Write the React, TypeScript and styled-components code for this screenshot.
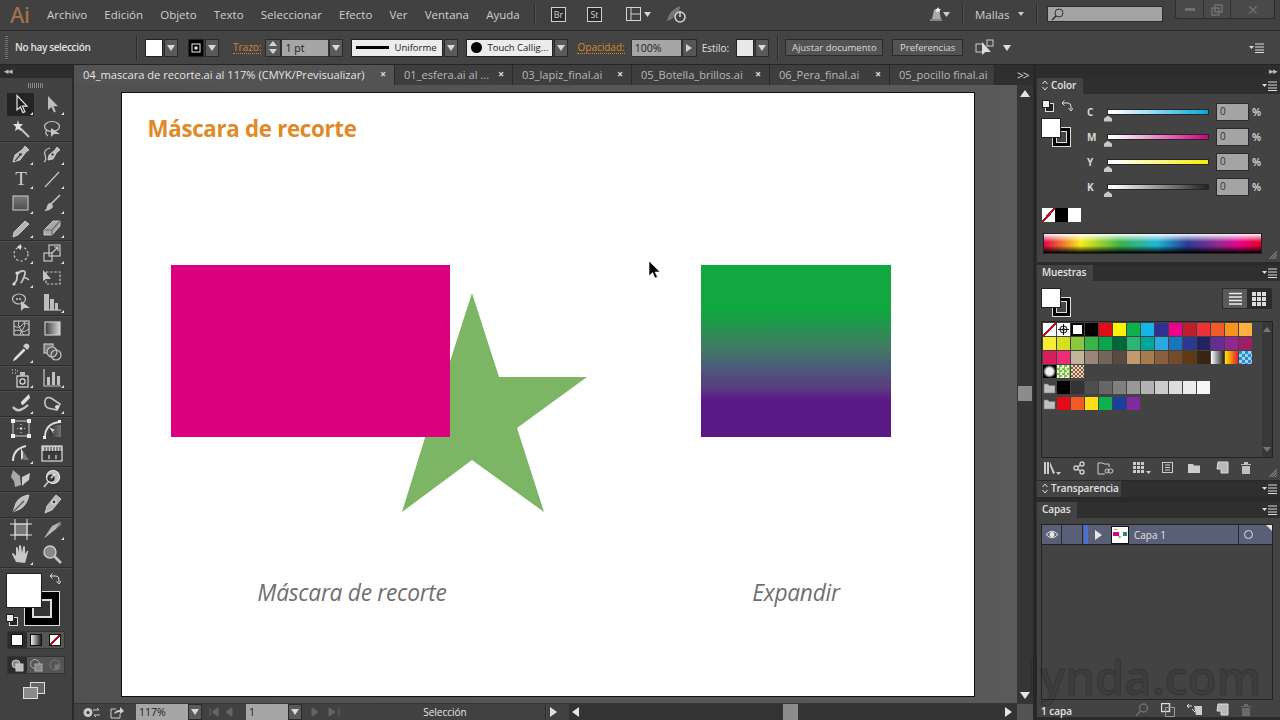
import React from 'react';
import styled, { createGlobalStyle } from 'styled-components';

const Global = createGlobalStyle`
  html, body { margin: 0; padding: 0; background: #3f3f3f; overflow: hidden; }
  * { box-sizing: border-box; }
`;

const Root = styled.div`
  position: relative;
  width: 1280px;
  height: 720px;
  overflow: hidden;
  display: flex;
  flex-direction: column;
  background: #3f3f3f;
  font-family: "Open Sans", "Noto Sans", sans-serif;
  font-size: 11px;
  color: #d6d6d6;
`;

/* ---------- menu bar ---------- */
const MenuBar = styled.header`
  height: 31px;
  flex: none;
  display: flex;
  align-items: center;
  padding-bottom: 2px;
  background: #414141;
  border-bottom: 1px solid #2a2a2a;
  position: relative;
`;
const Logo = styled.div`
  width: 47px;
  padding-left: 10px;
  font-family: "Noto Sans", sans-serif;
  font-size: 22px;
  font-weight: 500;
  letter-spacing: -0.5px;
  color: #a86f4d;
`;
const MenuList = styled.nav`
  display: flex;
  gap: 17.2px;
  width: 487px;
`;
const MenuItem = styled.span`
  font-size: 11.5px;
  color: #cfcfcf;
`;
const VSep = styled.i<{ $h?: number; $ml?: number }>`
  display: block;
  width: 2px;
  height: ${p => p.$h ?? 22}px;
  background: #2e2e2e;
  border-right: 1px solid #4e4e4e;
  margin-left: ${p => p.$ml ?? 0}px;
  flex: none;
`;
const BridgeIcon = styled.span<{ $ml: number }>`
  width: 15px;
  height: 15px;
  margin-left: ${p => p.$ml}px;
  border: 1px solid #d0d0d0;
  background: #2b2b2b;
  font-size: 9px;
  line-height: 13px;
  text-align: center;
  color: #d0d0d0;
  flex: none;
`;
const Slot = styled.span<{ $ml?: number; $w?: number }>`
  display: inline-flex;
  align-items: center;
  flex: none;
  margin-left: ${p => p.$ml ?? 0}px;
  ${p => (p.$w ? `width: ${p.$w}px;` : '')}
`;
const SearchBox = styled.div`
  margin-left: 9px;
  width: 116px;
  height: 16px;
  background: #a3a3a3;
  border: 1px solid #2c2c2c;
  display: flex;
  align-items: center;
  padding-left: 3px;
  flex: none;
`;
const WindowButtons = styled.div`
  position: absolute;
  right: 5px;
  top: 0;
  width: 100px;
  height: 19px;
  display: grid;
  grid-template-columns: 28px 27px 1fr;
  background: #494949;
  border: 1px solid #2c2c2c;
  border-top: none;
  border-radius: 0 0 3px 3px;
  color: #707070;
`;
const WinBtn = styled.span`
  display: flex;
  align-items: center;
  justify-content: center;
  font-size: 14px;
  border-right: 1px solid #333;
  &:last-child { border-right: none; }
`;

/* ---------- control bar ---------- */
const ControlBar = styled.div`
  height: 34px;
  flex: none;
  display: flex;
  align-items: center;
  background: #444444;
  border-bottom: 1px solid #252525;
  position: relative;
`;
const Grip = styled.i`
  width: 3px;
  height: 24px;
  margin-left: 5px;
  background: repeating-linear-gradient(to bottom, #777 0 1px, #3a3a3a 1px 2px);
  flex: none;
`;
const SelText = styled.span`
  margin-left: 7px;
  width: 121px;
  padding-bottom: 2px;
  font-size: 10px;
  font-weight: 600;
  letter-spacing: -0.35px;
  color: #e0e0e0;
  flex: none;
`;
const FillBox = styled.span<{ $w: number; $c: string; $ml?: number }>`
  display: flex;
  align-items: center;
  justify-content: center;
  width: ${p => p.$w}px;
  height: 18px;
  margin-left: ${p => p.$ml ?? 0}px;
  background: ${p => p.$c};
  border: 1px solid #222;
  flex: none;
`;
const DropBtn = styled.span<{ $h?: number; $ml?: number }>`
  width: 14px;
  height: ${p => p.$h ?? 18}px;
  margin-left: ${p => p.$ml ?? 1}px;
  display: flex;
  align-items: center;
  justify-content: center;
  background: #5a5a5a;
  border: 1px solid #2a2a2a;
  flex: none;
  &::after {
    content: '';
    border-left: 4px solid transparent;
    border-right: 4px solid transparent;
    border-top: 6px solid #d8d8d8;
  }
`;
const OrangeLabel = styled.span<{ $ml: number }>`
  margin-left: ${p => p.$ml}px;
  font-size: 10px;
  color: #d3882c;
  border-bottom: 1px dotted #d3882c;
  line-height: 12px;
  flex: none;
`;
const Spinner = styled.span`
  width: 16px;
  height: 18px;
  margin-left: 4px;
  display: grid;
  grid-template-rows: 1fr 1fr;
  background: #5a5a5a;
  border: 1px solid #2a2a2a;
  justify-items: center;
  align-items: center;
  flex: none;
`;
const TriUp = styled.i`
  border-left: 4px solid transparent;
  border-right: 4px solid transparent;
  border-bottom: 5px solid #d4d4d4;
`;
const TriDown = styled.i`
  border-left: 4px solid transparent;
  border-right: 4px solid transparent;
  border-top: 5px solid #d4d4d4;
`;
const Field = styled.span<{ $w: number; $ml?: number }>`
  width: ${p => p.$w}px;
  height: 18px;
  margin-left: ${p => p.$ml ?? 0}px;
  background: #a6a6a6;
  color: #222;
  font-size: 10.5px;
  line-height: 17px;
  padding-left: 3px;
  border: 1px solid #333;
  flex: none;
`;
const LightField = styled.span<{ $w: number; $ml: number }>`
  width: ${p => p.$w}px;
  height: 18px;
  margin-left: ${p => p.$ml}px;
  display: flex;
  align-items: center;
  background: #ececec;
  color: #222;
  font-size: 9.5px;
  border: 1px solid #222;
  padding: 0 4px;
  gap: 5px;
  white-space: nowrap;
  flex: none;
`;
const StrokeSample = styled.i`
  width: 33px;
  height: 3px;
  background: #000;
  flex: none;
`;
const BrushDot = styled.i`
  width: 11px;
  height: 11px;
  border-radius: 50%;
  background: #000;
  flex: none;
`;
const PlainLabel = styled.span<{ $ml: number }>`
  margin-left: ${p => p.$ml}px;
  font-size: 10px;
  color: #e0e0e0;
  flex: none;
`;
const ArrowBtn = styled.span`
  width: 15px;
  height: 18px;
  display: flex;
  align-items: center;
  justify-content: center;
  background: #555;
  border: 1px solid #2a2a2a;
  flex: none;
  &::after {
    content: '';
    border-top: 4px solid transparent;
    border-bottom: 4px solid transparent;
    border-left: 6px solid #d0d0d0;
  }
`;
const BarButton = styled.span<{ $w: number; $ml: number }>`
  width: ${p => p.$w}px;
  height: 17px;
  margin-left: ${p => p.$ml}px;
  background: #535353;
  border: 1px solid #2a2a2a;
  color: #dcdcdc;
  font-size: 9.5px;
  line-height: 15px;
  text-align: center;
  white-space: nowrap;
  flex: none;
`;
const RightMenu = styled.span`
  position: absolute;
  right: 16px;
  top: 12px;
  display: flex;
`;

/* ---------- work area ---------- */
const Work = styled.div`
  flex: 1;
  min-height: 0;
  display: flex;
`;

/* tools */
const ToolPanel = styled.aside`
  width: 74px;
  flex: none;
  background: #414141;
  border-right: 2px solid #2a2a2a;
  display: flex;
  flex-direction: column;
`;
const ToolHead = styled.div`
  height: 13px;
  background: #2d2d2d;
  color: #bbb;
  font-size: 9px;
  line-height: 12px;
  padding-left: 4px;
  letter-spacing: -1px;
`;
const ToolGrip = styled.div`
  height: 14px;
  display: flex;
  align-items: center;
  justify-content: center;
  &::after {
    content: '';
    width: 16px;
    height: 5px;
    background: repeating-linear-gradient(to right, #8a8a8a 0 1px, #3a3a3a 1px 2px);
  }
`;
const ToolGroup = styled.div`
  padding: 0 5px;
  display: grid;
  grid-template-columns: 31px 31px;
  grid-auto-rows: 24.5px;
  border-bottom: 1px solid #2d2d2d;
  box-shadow: 0 1px 0 #4c4c4c;
`;
const ToolCell = styled.div<{ $on?: boolean }>`
  position: relative;
  display: flex;
  align-items: center;
  justify-content: center;
  &::before {
    content: '';
    position: absolute;
    inset: 1px 2px 1px 2px;
    background: ${p => (p.$on ? '#242424' : 'transparent')};
  }
  svg { position: relative; }
`;
const Corner = styled.i`
  position: absolute;
  right: 3px;
  bottom: 2px;
  border-left: 3px solid transparent;
  border-bottom: 3px solid #e0e0e0;
`;
const ToolColor = styled.div`
  position: relative;
  height: 62px;
`;
const BigFill = styled.div`
  position: absolute;
  left: 6px;
  top: 5px;
  width: 36px;
  height: 35px;
  background: #fff;
  border: 1px solid #222;
  z-index: 1;
`;
const BigStroke = styled.div`
  position: absolute;
  left: 24px;
  top: 23px;
  width: 36px;
  height: 35px;
  background: #000;
  border: 1px solid #ddd;
  &::after {
    content: '';
    position: absolute;
    left: 7px;
    top: 7px;
    right: 7px;
    bottom: 7px;
    border: 2px solid #ddd;
    background: #333;
  }
`;
const OverIcon = styled.span<{ $x: number; $y: number }>`
  position: absolute;
  left: ${p => p.$x}px;
  top: ${p => p.$y}px;
  display: flex;
`;
const ModeRow = styled.div<{ $mt: number }>`
  width: 58px;
  height: 18px;
  margin: ${p => p.$mt}px 0 0 7px;
  display: grid;
  grid-template-columns: repeat(3, 1fr);
  background: #555;
  border: 1px solid #333;
`;
const ModeCell = styled.span<{ $on?: boolean }>`
  display: flex;
  align-items: center;
  justify-content: center;
  background: ${p => (p.$on ? '#2c2c2c' : 'transparent')};
`;
const ModeSwatch = styled.i<{ $bg: string }>`
  width: 12px;
  height: 12px;
  border: 1px solid #111;
  background: ${p => p.$bg};
`;
const ScreenMode = styled.div`
  margin: 8px 0 0 23px;
  display: flex;
`;

/* document */
const Doc = styled.main`
  flex: 1;
  min-width: 0;
  display: flex;
  flex-direction: column;
  border-right: 3px solid #272727;
`;
const DocTabs = styled.div`
  height: 20px;
  flex: none;
  display: flex;
  align-items: center;
  background: #2f2f2f;
  position: relative;
`;
const DocTab = styled.div<{ $w: number; $on?: boolean }>`
  width: ${p => p.$w}px;
  height: 20px;
  flex: none;
  display: flex;
  align-items: center;
  justify-content: space-between;
  padding: 0 8px 2px 9px;
  background: ${p => (p.$on ? '#535353' : '#3e3e3e')};
  border-right: 1px solid #2a2a2a;
  color: ${p => (p.$on ? '#e4e4e4' : '#b8b8b8')};
  font-size: 11.1px;
  white-space: nowrap;
  overflow: hidden;
`;
const Close = styled.b`
  font-size: 10px;
  color: #e0e0e0;
  line-height: 1;
  font-weight: 700;
`;
const More = styled.span`
  margin-left: 22px;
  font-size: 12px;
  letter-spacing: -1px;
  color: #d4d4d4;
`;
const DocBody = styled.div`
  flex: 1;
  min-height: 0;
  display: flex;
`;
const Canvas = styled.div`
  flex: 1;
  min-width: 0;
  padding: 8px 0 0 48px;
  background: linear-gradient(to right, #505050, #5a5a5a);
`;
const Artboard = styled.div`
  position: relative;
  width: 852px;
  height: 603px;
  background: #fff;
  outline: 1px solid #111;
`;
const Heading = styled.h1`
  position: absolute;
  left: 25.500px;
  top: 20px;
  margin: 0;
  font-family: "Open Sans", sans-serif;
  font-size: 22.3px;
  font-weight: 700;
  letter-spacing: -0.3px;
  color: #df8a26;
  white-space: nowrap;
`;
const Caption = styled.p<{ $cx: number }>`
  position: absolute;
  left: ${p => p.$cx - 150}px;
  top: 484px;
  width: 300px;
  margin: 0;
  text-align: center;
  font-family: "Open Sans", sans-serif;
  font-style: italic;
  font-size: 22.8px;
  letter-spacing: -0.3px;
  color: #6f6f6f;
`;
const Art = styled.div<{ $x: number; $y: number; $w: number; $h: number; $bg?: string }>`
  position: absolute;
  left: ${p => p.$x}px;
  top: ${p => p.$y}px;
  width: ${p => p.$w}px;
  height: ${p => p.$h}px;
  background: ${p => p.$bg ?? 'transparent'};
`;
const VScroll = styled.div`
  width: 16px;
  flex: none;
  background: #353535;
  display: flex;
  flex-direction: column;
  align-items: center;
  padding-top: 5px;
  position: relative;
`;
const ScrollUp = styled.i`
  border-left: 5px solid transparent;
  border-right: 5px solid transparent;
  border-bottom: 7px solid #e4e4e4;
`;
const ScrollDown = styled.i`
  position: absolute;
  bottom: 4px;
  border-left: 5px solid transparent;
  border-right: 5px solid transparent;
  border-top: 7px solid #e4e4e4;
`;
const ScrollThumb = styled.i`
  position: absolute;
  top: 301px;
  left: 1px;
  width: 14px;
  height: 15px;
  background: #8c8c8c;
`;
const StatusBar = styled.footer`
  height: 17px;
  flex: none;
  display: flex;
  align-items: center;
  background: #414141;
  border-top: 1px solid #353535;
`;
const StatusField = styled.span<{ $w: number; $ml: number }>`
  width: ${p => p.$w}px;
  height: 16px;
  margin-left: ${p => p.$ml}px;
  background: #a6a6a6;
  color: #222;
  font-size: 10.5px;
  line-height: 17px;
  padding-left: 3px;
  flex: none;
`;
const StatusText = styled.span`
  width: 200px;
  margin-left: 5px;
  text-align: center;
  font-size: 10px;
  color: #e8e8e8;
  flex: none;
`;
const HScroll = styled.div`
  flex: 1;
  height: 16px;
  background: #333;
  display: flex;
  align-items: center;
  padding: 0 5px 0 3px;
  justify-content: space-between;
  position: relative;
`;
const ScrollLeft = styled.i`
  border-top: 5px solid transparent;
  border-bottom: 5px solid transparent;
  border-right: 7px solid #e4e4e4;
`;
const ScrollRight = styled.i`
  border-top: 5px solid transparent;
  border-bottom: 5px solid transparent;
  border-left: 7px solid #e4e4e4;
`;
const HThumb = styled.i`
  position: absolute;
  left: 214px;
  top: 0;
  width: 15px;
  height: 16px;
  background: #8c8c8c;
`;
const ScrollCorner = styled.i`
  width: 16px;
  height: 16px;
  background: #535353;
  flex: none;
`;

/* dock */
const Dock = styled.aside`
  width: 244px;
  flex: none;
  display: flex;
  flex-direction: column;
  background: #2a2a2a;
`;
const DockTop = styled.div`
  height: 13px;
  text-align: right;
  padding-right: 3px;
  color: #bbb;
  font-size: 9px;
  line-height: 11px;
  letter-spacing: -1px;
  background: #2d2d2d;
`;
const PanelHead = styled.div<{ $mt?: number }>`
  height: 16px;
  flex: none;
  margin-top: ${p => p.$mt ?? 0}px;
  display: flex;
  align-items: stretch;
  justify-content: space-between;
  background: #2f2f2f;
  padding: 0 3px 0 1px;
`;
const PanelTab = styled.span<{ $w: number }>`
  width: ${p => p.$w}px;
  background: #434343;
  font-size: 10px;
  font-weight: 600;
  letter-spacing: -0.1px;
  color: #e4e4e4;
  padding: 0 0 2px 5px;
  display: flex;
  align-items: center;
  gap: 3px;
  white-space: nowrap;
`;
const PanelMenu = styled.span`
  display: flex;
  align-items: center;
`;
const Panel = styled.section<{ $h: number }>`
  position: relative;
  height: ${p => p.$h}px;
  flex: none;
  background: #434343;
  margin-left: 1px;
`;
const ColorTop = styled.div`
  display: flex;
  height: 108px;
`;
const ColorLeft = styled.div`
  position: relative;
  width: 50px;
  flex: none;
`;
const Sliders = styled.div`
  padding-top: 5px;
  flex: 1;
`;
const SliderRow = styled.div`
  height: 25.2px;
  display: flex;
  align-items: center;
`;
const SliderLetter = styled.span`
  width: 20px;
  font-size: 10px;
  font-weight: 700;
  color: #d8d8d8;
  flex: none;
`;
const Track = styled.div<{ $c: string }>`
  position: relative;
  width: 102px;
  height: 6px;
  background: linear-gradient(to right, #fff 5%, ${p => p.$c});
  border: 1px solid #262626;
  flex: none;
  &::after {
    content: '';
    position: absolute;
    left: -4px;
    top: 6px;
    width: 8px;
    height: 6px;
    background: #c8c8c8;
    clip-path: polygon(50% 0, 100% 50%, 100% 100%, 0 100%, 0 50%);
  }
`;
const SliderInput = styled.span`
  width: 33px;
  height: 18px;
  margin-left: 7px;
  background: #a4a4a4;
  border: 1px solid #2b2b2b;
  color: #333;
  font-size: 10px;
  line-height: 14px;
  padding-left: 3px;
  flex: none;
`;
const Percent = styled.span`
  margin-left: 3px;
  font-size: 10.5px;
  font-weight: 600;
  color: #dcdcdc;
`;
const FillSmall = styled.i<{ $x: number; $y: number }>`
  position: absolute;
  left: ${p => p.$x}px;
  top: ${p => p.$y}px;
  width: 20px;
  height: 20px;
  background: #fff;
  border: 1px solid #222;
  z-index: 1;
`;
const StrokeSmall = styled.i<{ $x: number; $y: number }>`
  position: absolute;
  left: ${p => p.$x}px;
  top: ${p => p.$y}px;
  width: 19px;
  height: 20px;
  background: #000;
  border: 1px solid #ddd;
  &::after {
    content: '';
    position: absolute;
    inset: 3px;
    border: 1px solid #ddd;
    background: #444;
  }
`;
const QuickRow = styled.div`
  margin: 6px 0 0 5px;
  display: flex;
  height: 15px;
`;
const Quick = styled.i<{ $bg: string }>`
  width: 13px;
  height: 14px;
  background: ${p => p.$bg};
`;
const Spectrum = styled.div`
  margin: 10px 0 0 6px;
  width: 219px;
  height: 21px;
  border: 1px solid #222;
  background:
    linear-gradient(to bottom, rgba(255,255,255,.95) 0, rgba(255,255,255,0) 42%, rgba(0,0,0,0) 62%, #000 100%),
    linear-gradient(to right, #e8004c 0, #f7ec1a 17%, #3cb34a 35%, #1fb5d6 52%, #2a3a96 66%, #8e2a90 80%, #ec008c 90%, #e00028 100%);
`;
const ResizeGrip = styled.i`
  position: absolute;
  right: 3px;
  bottom: 3px;
  width: 9px;
  height: 9px;
  background: repeating-linear-gradient(135deg, transparent 0 1px, #777 1px 2px);
  clip-path: polygon(100% 0, 100% 100%, 0 100%);
`;
const SwatchHead = styled.div`
  position: relative;
  height: 40px;
`;
const ViewBtns = styled.div`
  position: absolute;
  left: 185px;
  top: 7px;
  width: 50px;
  height: 21px;
  display: grid;
  grid-template-columns: 1fr 1fr;
  border: 1px solid #2c2c2c;
`;
const ViewBtn = styled.span<{ $on?: boolean }>`
  display: flex;
  align-items: center;
  justify-content: center;
  background: ${p => (p.$on ? '#5a5a5a' : '#2b2b2b')};
`;
const SwatchBox = styled.div`
  margin-left: 4px;
  width: 232px;
  height: 137px;
  border: 1px solid #232323;
  display: flex;
`;
const SwatchList = styled.div`
  flex: 1;
  padding: 1px 0 0 1px;
`;
const SwatchRow = styled.div<{ $mb?: number }>`
  display: flex;
  height: 14px;
  margin-bottom: ${p => p.$mb ?? 0}px;
`;
const Swatch = styled.i<{ $bg: string }>`
  width: 13px;
  height: 13px;
  margin-right: 1px;
  background: ${p => p.$bg};
  display: flex;
  align-items: center;
  justify-content: center;
  flex: none;
`;
const SwatchScroll = styled.div`
  width: 10px;
  background: #383838;
  display: flex;
  flex-direction: column;
  align-items: center;
  justify-content: space-between;
  padding: 5px 0;
`;
const MiniUp = styled.i`
  border-left: 4px solid transparent;
  border-right: 4px solid transparent;
  border-bottom: 5px solid #777;
`;
const MiniDown = styled.i`
  border-left: 4px solid transparent;
  border-right: 4px solid transparent;
  border-top: 5px solid #777;
`;
const IconBar = styled.div`
  height: 22px;
  display: flex;
  align-items: center;
  position: relative;
`;
const LayerBox = styled.div`
  margin: 6px 0 0 4px;
  width: 232px;
  height: 176px;
  border: 1px solid #232323;
`;
const LayerRow = styled.div`
  height: 20px;
  display: flex;
  align-items: center;
  background: #585f76;
  border-bottom: 1px solid #222;
  position: relative;
`;
const LayerCell = styled.span<{ $w: number }>`
  width: ${p => p.$w}px;
  height: 100%;
  display: flex;
  align-items: center;
  justify-content: center;
  border-right: 1px solid #2a2a2a;
  flex: none;
`;
const ColorBar = styled.i`
  width: 4px;
  height: 100%;
  background: #4a6fd6;
  margin-left: 1px;
  border-right: 0;
  flex: none;
`;
const LayerArrow = styled.i`
  margin-left: 7px;
  border-top: 5px solid transparent;
  border-bottom: 5px solid transparent;
  border-left: 7px solid #e6e6e6;
  flex: none;
`;
const Thumb = styled.span`
  position: relative;
  width: 18px;
  height: 18px;
  margin-left: 9px;
  background: #fff;
  border: 1px solid #111;
  flex: none;
  display: flex;
`;
const LayerName = styled.span`
  margin-left: 5px;
  width: 104px;
  font-size: 10px;
  color: #e4e4e4;
  flex: none;
`;
const Target = styled.span`
  flex: 1;
  height: 100%;
  display: flex;
  align-items: center;
  padding-left: 5px;
  border-left: 1px solid #2a2a2a;
`;
const TargetRing = styled.i`
  width: 9px;
  height: 9px;
  border-radius: 50%;
  border: 1px solid #e0e0e0;
`;
const LayerFlag = styled.i`
  position: absolute;
  right: 0;
  top: 0;
  border-left: 6px solid transparent;
  border-top: 6px solid #e6e6e6;
`;
const LayerCount = styled.span`
  margin-left: 4px;
  width: 97px;
  font-size: 10px;
  font-weight: 600;
  color: #e4e4e4;
  flex: none;
`;
const Watermark = styled.div`
  position: absolute;
  left: 1027px;
  top: 654px;
  font-family: "Open Sans", sans-serif;
  font-size: 47px;
  line-height: 46px;
  font-weight: 600;
  color: rgba(40, 40, 40, 0.22);
  -webkit-text-stroke: 1px rgba(20, 20, 20, 0.28);
  pointer-events: none;
  white-space: nowrap;
  z-index: 5;
`;

/* ---------- drawings ---------- */
const L = '#c6c6c6';
const Svg: React.FC<{ s?: number; w?: number; h?: number; children: React.ReactNode }> = ({ s = 20, w, h, children }) => (
  <svg width={w ?? s} height={h ?? s} viewBox={`0 0 ${w ?? s} ${h ?? s}`} fill="none" stroke={L} strokeWidth={1.2}>{children}</svg>
);
const Selection = () => <Svg><path d="M6 1.5V16l3.3-3 2.6 5.6 2-1-2.5-5.4H16Z" fill="#1c1c1c" stroke="#e6e6e6" /></Svg>;
const Direct = () => <Svg><path d="M6 2v14l3.3-3 2.8 5.5 1.8-1-2.5-5.3H16Z" fill="#bdbdbd" stroke="none" /></Svg>;
const Wand = () => <Svg><path d="M9 9l9 9" strokeWidth={2} /><path d="M7 1l1 4 4 0-3 3 1 4-3-2-3 2 1-4-3-3 4 0z" fill="#e0e0e0" stroke="none" /></Svg>;
const Lasso = () => <Svg><ellipse cx="10" cy="7.5" rx="7.5" ry="5" /><path d="M5 11q-3 3 1 6" /><path d="M9 9v9l3-3h6Z" fill="#c6c6c6" stroke="none" /></Svg>;
const Pen = () => <Svg><path d="M14 2l4 4-3 2-6 8-7 2 2-7 8-6z" fill="#bdbdbd" stroke="#ddd" strokeWidth={0.8} /><path d="M4 17l5-6" stroke="#444" /><circle cx="9.5" cy="10.5" r="1.4" fill="#444" stroke="none" /></Svg>;
const CurvePen = () => <Svg><path d="M15 3l3 3-3 2-4 7-5 1 1-5 6-5z" fill="#bdbdbd" stroke="#ddd" strokeWidth={0.8} /><path d="M8 4Q1 6 3 11t-1 7" /><circle cx="10.5" cy="10.5" r="1.2" fill="#444" stroke="none" /></Svg>;
const TypeT = () => <Svg><text x="10" y="16" textAnchor="middle" fontFamily="Liberation Serif, serif" fontSize="19" fill="#cfcfcf" stroke="none">T</text></Svg>;
const LineI = () => <Svg><path d="M3 18L17 3" /></Svg>;
const RectI = () => <Svg s={22}><defs><linearGradient id="rg" x1="0" x2="0" y1="0" y2="1"><stop offset="0" stopColor="#7a7a7a" /><stop offset="1" stopColor="#4e4e4e" /></linearGradient></defs><rect x="3" y="4" width="15" height="14" fill="url(#rg)" stroke="#bbb" /></Svg>;
const Brush = () => <Svg><path d="M18 2L8 12" strokeWidth={1.6} /><path d="M8 10q3 1 3 4-3 4-9 4 3-2 3-5 1-3 3-3z" fill="#c0c0c0" stroke="none" /></Svg>;
const Pencil = () => <Svg><path d="M14 3l4 3L7 17l-5 2 1-5z" fill="#b5b5b5" stroke="#dadada" strokeWidth={0.8} /></Svg>;
const Eraser = () => <Svg><path d="M11 3h7v5l-8 9H2v-5z" fill="#a8a8a8" stroke="#ddd" strokeWidth={0.8} /><path d="M2 12h8l8-9M10 12v5" stroke="#6a6a6a" /></Svg>;
const Rotate = () => <Svg><circle cx="10" cy="11" r="7" strokeDasharray="2.5 2" /><path d="M10 1v6l-4-3z" fill="#ddd" stroke="none" /></Svg>;
const Scale = () => <Svg><rect x="2" y="10" width="8" height="8" /><rect x="7" y="2" width="11" height="11" /><path d="M10 10l6-6M12 4h4v4" /></Svg>;
const Warp = () => <Svg><path d="M3 15q3-1 3-6t5-6 2 6-3 5" strokeWidth={1.8} /><circle cx="3" cy="16" r="1.6" fill="#ddd" stroke="none" /><circle cx="6" cy="5" r="1.6" fill="#ddd" stroke="none" /><path d="M12 10q3-1 6 2" strokeWidth={1.4} /></Svg>;
const FreeT = () => <Svg><rect x="4" y="4" width="14" height="12" strokeDasharray="2.5 1.6" /><path d="M1 2v11l3-2 5 0z" fill="#c4c4c4" stroke="none" /></Svg>;
const Builder = () => <Svg><ellipse cx="8" cy="7" rx="6.5" ry="5" /><circle cx="6" cy="7" r="1" fill="#ccc" stroke="none" /><circle cx="9" cy="7" r="1" fill="#ccc" stroke="none" /><path d="M10 9v10l3-3h6Z" fill="#c6c6c6" stroke="none" /></Svg>;
const Perspective = () => <Svg><path d="M2 2h5v16H2zM8 7h4v11H8zM13 11h3v7h-3z" fill="#bdbdbd" stroke="none" /><path d="M2 18h17" /></Svg>;
const Mesh = () => <Svg><rect x="3" y="3" width="15" height="14" /><path d="M3 8q5 3 8-1t7 0M3 13q4-2 7 0t8-2M8 3q-2 4 1 7t0 7M13 3q2 5-1 8t1 6" strokeWidth={1} /></Svg>;
const Gradient = () => <Svg><defs><linearGradient id="gr"><stop offset="0" stopColor="#3a3a3a" /><stop offset="1" stopColor="#d8d8d8" /></linearGradient></defs><rect x="3" y="4" width="15" height="13" fill="url(#gr)" stroke="#ccc" /></Svg>;
const Dropper = () => <Svg><path d="M13 7l-9 9-1.5 2.5L5 17l9-9" fill="#ddd" stroke="#ddd" /><path d="M12 4l4 4 2-2q1-3-1-4t-3 0z" fill="#ccc" stroke="none" /></Svg>;
const Blend = () => <Svg><rect x="2" y="2" width="9" height="9" fill="#777" /><circle cx="10" cy="10" r="5" fill="#555" /><circle cx="14" cy="13" r="5" /></Svg>;
const Spray = () => <Svg><rect x="6" y="8" width="11" height="11" fill="#3c3c3c" stroke="#ddd" /><circle cx="11.5" cy="13.5" r="2.6" stroke="#ddd" /><path d="M9 4h5v4H9z" fill="#bbb" stroke="none" /><path d="M1 2h1M4 2h1M1 5h1M4 5h1M6 3h1" stroke="#ddd" /></Svg>;
const Graph = () => <Svg><path d="M2 1v17h17" /><path d="M5 9h3v8H5zM10 4h3v13h-3zM15 8h3v9h-3z" fill="#c0c0c0" stroke="none" /></Svg>;
const Blob = () => <Svg><path d="M2 14q3 4 7 3t8-5" strokeWidth={2.4} /><path d="M18 1l-8 8q0 3 2 3l7-7z" fill="#ddd" stroke="none" /></Svg>;
const Shaper = () => <Svg><path d="M3 8q1-5 6-3l9 6-3 6-9-2q-4-2-3-7z" strokeWidth={1.6} /><circle cx="15" cy="14" r="2" fill="#ddd" stroke="none" /></Svg>;
const Transform = () => <Svg s={22}><rect x="3" y="3" width="16" height="15" strokeWidth={1.6} stroke="#999" /><path d="M1 1h4v4H1zM17 1h4v4h-4zM1 16h4v4H1zM17 16h4v4h-4z" fill="#eee" stroke="none" /><circle cx="11" cy="10.5" r="1.3" fill="#ddd" stroke="none" /><path d="M11 6v1M11 14v1M7 10.5h1M14 10.5h1" /></Svg>;
const ArcTool = () => <Svg><defs><linearGradient id="ag"><stop offset="0" stopColor="#333" /><stop offset="1" stopColor="#777" /></linearGradient></defs><rect x="8" y="6" width="11" height="12" fill="url(#ag)" stroke="none" /><path d="M3 18Q3 5 17 3" strokeWidth={1.8} stroke="#ddd" /><path d="M7 8l6 3-2 1 1 3-3-4z" fill="#ddd" stroke="none" /><rect x="1" y="17" width="3" height="3" fill="#eee" stroke="none" /><rect x="16" y="1" width="3" height="3" fill="#eee" stroke="none" /></Svg>;
const WidthT = () => <Svg><path d="M2 18Q2 6 15 3" strokeWidth={2} stroke="#ddd" /><path d="M10 5v12l4-4z" fill="#ddd" stroke="none" /><path d="M12 8l6 9h-6z" fill="#777" stroke="none" /></Svg>;
const Ruler = () => <Svg s={22}><rect x="1" y="4" width="20" height="15" fill="#3a3a3a" stroke="#ddd" /><path d="M1 4h20v5H1z" fill="#ccc" stroke="none" /><path d="M4 5v5M7 5v5M10 5v6M13 5v5M16 5v5M19 5v6" stroke="#222" strokeWidth={0.9} /><path d="M8 13v4M15 13v4" stroke="#ddd" /></Svg>;
const Butterfly = () => <Svg s={22}><path d="M10 8L3 2 1 9l3 4 1 6 6-2z" fill="#a9a9a9" stroke="none" /><path d="M12 9l8-4-1 7-4 3-3 3z" fill="#cdcdcd" stroke="none" /></Svg>;
const Magic = () => <Svg><circle cx="11" cy="8" r="6.5" fill="#bdbdbd" stroke="#eee" /><circle cx="9" cy="9" r="3" fill="#444" stroke="#222" /><path d="M6 13l-4 5" strokeWidth={1.8} /><path d="M9 9l4-4" stroke="#eee" /></Svg>;
const Feather = () => <Svg s={22}><path d="M19 2q-9 1-13 8L3 19l7-3q7-4 9-14z" fill="#bfbfbf" stroke="#e0e0e0" strokeWidth={0.8} /><path d="M3 19L14 8" stroke="#555" /></Svg>;
const Marker = () => <Svg><path d="M14 1l5 4-9 11-5 2-2 1 1-3 1-4z" fill="#b5b5b5" stroke="#e0e0e0" strokeWidth={0.8} /><circle cx="12" cy="8" r="2" fill="#333" stroke="#ddd" /></Svg>;
const ArtboardI = () => <Svg s={22}><rect x="5" y="5" width="12" height="11" fill="#777" stroke="#aaa" /><path d="M0 5h22M0 16h22M5 0v21M17 0v21" stroke="#e4e4e4" strokeWidth={1} /></Svg>;
const Knife = () => <Svg><path d="M18 2l-4 7-10 8-2 1 8-12z" fill="#b5b5b5" stroke="none" /><path d="M18 2h1v3l-5 4z" fill="#888" stroke="none" /></Svg>;
const Hand = () => <Svg s={22}><path d="M6 19L2 11q0-2 2 0l2 2V5q0-2 2 0l1 5V3q1-2 2 0l1 7 1-6q1-2 2 0l0 7 2-3q2-1 1 1l-2 8-1 3z" fill="#c8c8c8" stroke="none" /></Svg>;
const Zoom = () => <Svg><circle cx="8" cy="8" r="6" fill="#888" stroke="#ccc" strokeWidth={1.4} /><path d="M12.5 12.5L19 19" strokeWidth={2.6} /></Svg>;

const PanelMenuIcon = () => (
  <svg width="15" height="10" viewBox="0 0 15 10"><path d="M0 3h5L2.5 6z" fill="#ddd" /><path d="M6 1h9M6 4h9M6 7h9M6 9.5h9" stroke="#ddd" strokeWidth={1} /></svg>
);
const UpDown = () => (
  <svg width="6" height="11" viewBox="0 0 6 11" fill="none" stroke="#ddd"><path d="M.5 4L3 1l2.500 3M.5 7L3 10l2.500-3" /></svg>
);
const DefaultColors = () => (
  <svg width="12" height="12" viewBox="0 0 12 12"><rect x="3.5" y="3.5" width="8" height="8" fill="#222" stroke="#ddd" /><rect x=".5" y=".5" width="7" height="7" fill="#eee" stroke="#222" /></svg>
);
const SwapArrows = () => (
  <svg width="12" height="12" viewBox="0 0 12 12" fill="none" stroke="#ddd"><path d="M2 3h5q3 0 3 4v2" /><path d="M3.5 .5L1 3l2.500 2.500M7.500 8L10 11l2-3" /></svg>
);
const Eye = () => (
  <svg width="14" height="9" viewBox="0 0 14 9"><path d="M1 4.500Q7-2 13 4.500 7 11 1 4.500Z" fill="none" stroke="#e6e6e6" /><circle cx="7" cy="4.500" r="2.500" fill="#e6e6e6" /></svg>
);
const ThumbArt = () => (
  <svg width="16" height="16" viewBox="0 0 16 16"><rect x="1" y="5" width="6" height="4" fill="#dc0081" /><rect x="11" y="5" width="4" height="4" fill="#2a8a5a" /><rect x="2" y="2" width="3" height="1" fill="#df8a26" /><path d="M6 9h3l-1 3z" fill="#7cb563" /></svg>
);

const FolderI = () => (
  <svg width="13" height="13" viewBox="0 0 13 13"><path d="M1 3h4l1 1.500h6V12H1z" fill="#c0c0c0" stroke="#777" strokeWidth={0.6} /></svg>
);
const BarIcon: React.FC<{ d: string; w?: number; fill?: string; stroke?: string }> = ({ d, w = 14, fill = '#cdcdcd', stroke = 'none' }) => (
  <svg width={w} height="14" viewBox={`0 0 ${w} 14`}><path d={d} fill={fill} stroke={stroke} /></svg>
);

const tools: { a: React.FC; b: React.FC; ac?: boolean; bc?: boolean; on?: boolean }[][] = [
  [{ a: Selection, b: Direct, ac: true, bc: true, on: true }, { a: Wand, b: Lasso }],
  [{ a: Pen, b: CurvePen, ac: true, bc: true }, { a: TypeT, b: LineI, ac: true, bc: true }, { a: RectI, b: Brush, ac: true, bc: true }, { a: Pencil, b: Eraser, ac: true, bc: true }],
  [{ a: Rotate, b: Scale, ac: true, bc: true }, { a: Warp, b: FreeT, ac: true }, { a: Builder, b: Perspective, bc: true }],
  [{ a: Mesh, b: Gradient }, { a: Dropper, b: Blend, ac: true }],
  [{ a: Spray, b: Graph, ac: true, bc: true }],
  [{ a: Blob, b: Shaper, ac: true, bc: true }],
  [{ a: Transform, b: ArcTool }, { a: WidthT, b: Ruler, ac: true }],
  [{ a: Butterfly, b: Magic }],
  [{ a: Feather, b: Marker }],
  [{ a: ArtboardI, b: Knife, bc: true }, { a: Hand, b: Zoom, ac: true }],
];

const noneFlip = 'linear-gradient(to bottom right, #fff 0 44%, #b01020 44% 56%, #fff 56% 100%)';
const row1 = ['#e30b17', '#fff200', '#0cb14b', '#14b6e8', '#2e3192', '#ec008c', '#be1e2d', '#ed3237', '#f15a29', '#f7941d', '#fbb040'];
const row2 = ['#f9ed32', '#d7df23', '#8dc63f', '#39b54a', '#09a64b', '#006838', '#2bb673', '#00a79d', '#27aae1', '#1c75bc', '#2b3990', '#262262', '#662d91', '#92278f', '#9e1f63'];
const row3 = ['#da1c5c', '#ee2a7b', '#c2b59b', '#9b8579', '#726658', '#594a42', '#c49a6c', '#a97c50', '#8b5e3c', '#754c29', '#603913', '#3c2415',
  'linear-gradient(to right, #fff, #222)', 'linear-gradient(to right, #ffe600, #e8202a)', 'repeating-conic-gradient(#9fd0ee 0 25%, #2a8fd0 0 50%) 0 0/6px 6px'];
const row4 = ['radial-gradient(circle, #eee 0 40%, #000 70%)', 'repeating-conic-gradient(#7ac143 0 25%, #e8f4d8 0 50%) 0 0/5px 5px', 'repeating-conic-gradient(#8a5a3c 0 25%, #e8d8c8 0 50%) 0 0/4px 4px'];
const row5 = ['#000', '#333', '#4d4d4d', '#666', '#808080', '#999', '#b3b3b3', '#ccc', '#dcdcdc', '#ececec', '#f6f6f6'];
const row6 = ['#e30b17', '#f15a24', '#ffde17', '#0cb14b', '#1b3f9e', '#7f2a9f'];

const menu = ['Archivo', 'Edición', 'Objeto', 'Texto', 'Seleccionar', 'Efecto', 'Ver', 'Ventana', 'Ayuda'];
const docTabs = [
  { t: '04_mascara de recorte.ai al 117% (CMYK/Previsualizar)', w: 321, on: true },
  { t: '01_esfera.ai al ...', w: 118 },
  { t: '03_lapiz_final.ai', w: 119 },
  { t: '05_Botella_brillos.ai', w: 138 },
  { t: '06_Pera_final.ai', w: 120 },
];
const sliders = [
  { l: 'C', c: '#00a8e0' },
  { l: 'M', c: '#d0007f' },
  { l: 'Y', c: '#f4ee00' },
  { l: 'K', c: '#222222' },
];

const IconAt = styled.span<{ $x: number }>`
  position: absolute;
  left: ${p => p.$x}px;
  top: 3px;
  display: flex;
`;

export default function App() {
  return (
    <Root>
      <Global />
      <MenuBar>
        <Logo>Ai</Logo>
        <MenuList>{menu.map(m => <MenuItem key={m}>{m}</MenuItem>)}</MenuList>
        <VSep />
        <BridgeIcon $ml={15}>Br</BridgeIcon>
        <BridgeIcon $ml={21}>St</BridgeIcon>
        <Slot $ml={24}>
          <svg width="26" height="14" viewBox="0 0 26 14" fill="none" stroke="#d4d4d4"><rect x=".5" y=".5" width="14" height="13" /><path d="M5 1v12M5 7h9" /><path d="M18 5h7l-3.500 5z" fill="#d4d4d4" stroke="none" /></svg>
        </Slot>
        <Slot $ml={13}>
          <svg width="24" height="20" viewBox="0 0 24 20" fill="none"><path d="M2 17Q4 6 15 2q0 6-5 9l-3 4z" fill="#777" /><circle cx="15" cy="13" r="5" stroke="#d0d0d0" strokeWidth={1.6} /><path d="M15 7v6" stroke="#d0d0d0" strokeWidth={1.6} /></svg>
        </Slot>
        <Slot $ml={240}>
          <svg width="22" height="16" viewBox="0 0 22 16"><path d="M3 13l2-9 5-2 1 6 1 5z" fill="#aaa" /><path d="M1 14h12" stroke="#ccc" /><path d="M9 1l1 2 2 0-1.500 1.500.5 2-2-1-2 1 .5-2L6 3l2 0z" fill="#eee" /><path d="M14 6h7l-3.500 5z" fill="#ccc" /></svg>
        </Slot>
        <VSep $ml={11} />
        <Slot $ml={11}><MenuItem>Mallas</MenuItem></Slot>
        <Slot $ml={9}><svg width="6" height="4" viewBox="0 0 6 4"><path d="M0 0h6L3 4z" fill="#ccc" /></svg></Slot>
        <VSep $ml={12} />
        <SearchBox>
          <svg width="13" height="13" viewBox="0 0 13 13" fill="none" stroke="#333"><circle cx="8" cy="5" r="4" /><path d="M5 8l-4 4" strokeWidth={1.6} /></svg>
        </SearchBox>
        <WindowButtons>
          <WinBtn><svg width="10" height="4"><rect width="10" height="3" fill="#707070" /></svg></WinBtn>
          <WinBtn><svg width="12" height="12" fill="none" stroke="#707070" strokeWidth="1.500"><rect x="4" y="1" width="7" height="7" /><rect x="1" y="4" width="7" height="7" /></svg></WinBtn>
          <WinBtn>✕</WinBtn>
        </WindowButtons>
      </MenuBar>

      <ControlBar>
        <Grip />
        <SelText>No hay selección</SelText>
        <VSep $h={26} />
        <FillBox $w={18} $c="#fff" $ml={7} />
        <DropBtn />
        <FillBox $w={16} $c="#000" $ml={10}>
          <svg width="10" height="10" fill="none" stroke="#eee"><rect x="1" y="1" width="8" height="8" /><rect x="4" y="4" width="2" height="2" fill="#eee" /></svg>
        </FillBox>
        <DropBtn />
        <OrangeLabel $ml={14}>Trazo:</OrangeLabel>
        <Spinner><TriUp /><TriDown /></Spinner>
        <Field $w={48}>1 pt</Field>
        <DropBtn $ml={0} />
        <LightField $w={92} $ml={8}><StrokeSample />Uniforme</LightField>
        <DropBtn />
        <LightField $w={87} $ml={8}><BrushDot />Touch Callig...</LightField>
        <DropBtn />
        <OrangeLabel $ml={9}>Opacidad:</OrangeLabel>
        <Field $w={51} $ml={6}>100%</Field>
        <ArrowBtn />
        <PlainLabel $ml={5}>Estilo:</PlainLabel>
        <FillBox $w={18} $c="#e8e8e8" $ml={7} />
        <DropBtn />
        <VSep $h={26} $ml={8} />
        <BarButton $w={98} $ml={6}>Ajustar documento</BarButton>
        <BarButton $w={71} $ml={9}>Preferencias</BarButton>
        <Slot $ml={12}>
          <svg width="20" height="18" viewBox="0 0 20 18" fill="none" stroke="#ccc"><rect x="1" y="5" width="7" height="8" /><rect x="12" y="1" width="6" height="6" /><path d="M7 3v13l3.500-3H16z" fill="#ddd" stroke="none" /></svg>
        </Slot>
        <Slot $ml={8}><svg width="8" height="6" viewBox="0 0 8 6"><path d="M0 0h8L4 6z" fill="#ddd" /></svg></Slot>
        <RightMenu><PanelMenuIcon /></RightMenu>
      </ControlBar>

      <Work>
        <ToolPanel>
          <ToolHead>◂◂</ToolHead>
          <ToolGrip />
          {tools.map((g, i) => (
            <ToolGroup key={i}>
              {g.map((r, j) => (
                <React.Fragment key={j}>
                  <ToolCell $on={r.on}><r.a />{r.ac && <Corner />}</ToolCell>
                  <ToolCell><r.b />{r.bc && <Corner />}</ToolCell>
                </React.Fragment>
              ))}
            </ToolGroup>
          ))}
          <ToolColor>
            <BigFill />
            <BigStroke />
            <OverIcon $x={49} $y={5}><SwapArrows /></OverIcon>
            <OverIcon $x={6} $y={46}><DefaultColors /></OverIcon>
          </ToolColor>
          <ModeRow $mt={1}>
            <ModeCell $on><ModeSwatch $bg="#fff" /></ModeCell>
            <ModeCell><ModeSwatch $bg="linear-gradient(to right, #eee, #222)" /></ModeCell>
            <ModeCell><ModeSwatch $bg={noneFlip} /></ModeCell>
          </ModeRow>
          <ModeRow $mt={7}>
            <ModeCell $on><svg width="14" height="14" fill="none" stroke="#ccc"><circle cx="6" cy="6" r="4" fill="#888" /><rect x="6" y="6" width="7" height="7" fill="#bbb" /></svg></ModeCell>
            <ModeCell><svg width="14" height="14" fill="none" stroke="#aaa"><circle cx="6" cy="6" r="4.500" /><rect x="6" y="6" width="7" height="7" fill="#888" /></svg></ModeCell>
            <ModeCell><svg width="14" height="14" fill="none" stroke="#777"><circle cx="7" cy="7" r="5" /><rect x="7" y="7" width="4" height="4" fill="#777" /></svg></ModeCell>
          </ModeRow>
          <ScreenMode>
            <svg width="22" height="17" viewBox="0 0 22 17"><rect x="7.500" y=".5" width="14" height="11" fill="#666" stroke="#ddd" /><rect x=".5" y="5.500" width="14" height="11" fill="#8a8a8a" stroke="#ddd" /></svg>
          </ScreenMode>
        </ToolPanel>

        <Doc>
          <DocTabs>
            {docTabs.map(t => <DocTab key={t.t} $w={t.w} $on={t.on}>{t.t}<Close>×</Close></DocTab>)}
            <DocTab $w={105}>05_pocillo final.ai</DocTab>
            <More>&gt;&gt;</More>
          </DocTabs>
          <DocBody>
            <Canvas>
              <Artboard>
                <Heading>Máscara de recorte</Heading>
                <Art $x={235} $y={200} $w={231} $h={220}>
                  <svg width="231" height="220" viewBox="0 0 231 220"><polygon points="115,0 142,84 230,84 160,135 187,219 115,167 45,219 71,135 0,84 88,84" fill="#7cb563" /></svg>
                </Art>
                <Art $x={49} $y={172} $w={279} $h={172} $bg="#dc0081" />
                <Art $x={579} $y={172} $w={190} $h={172} $bg="linear-gradient(to bottom, #10a83f 0, #10a83f 26%, #3f7a62 48%, #4a5f78 58%, #5a3a80 72%, #5a1a86 78%, #5a1a86 100%)" />
                <Caption $cx={230}>Máscara de recorte</Caption>
                <Caption $cx={674}>Expandir</Caption>
                <Art $x={526} $y={167} $w={14} $h={20}>
                  <svg width="14" height="20" viewBox="0 0 14 20"><path d="M1 1v15l3.500-3.500L7 18l2.500-1-2.500-5h5z" fill="#000" stroke="#fff" strokeWidth={0.6} /></svg>
                </Art>
              </Artboard>
            </Canvas>
            <VScroll>
              <ScrollUp />
              <ScrollThumb />
              <ScrollDown />
            </VScroll>
          </DocBody>
          <StatusBar>
            <Slot $ml={8}><svg width="20" height="13" viewBox="0 0 20 13"><circle cx="6" cy="6.500" r="4.500" fill="#c8c8c8" /><circle cx="6" cy="6.500" r="1.500" fill="#333" /><path d="M11 4h6l-2-2M18 9h-6l2 2" stroke="#c8c8c8" fill="none" /></svg></Slot>
            <Slot $ml={8}><svg width="14" height="13" viewBox="0 0 14 13" fill="none" stroke="#d0d0d0"><path d="M10 8v4H1V3h5" /><path d="M4 8q1-4 6-4V1l4 4-4 3V6q-3 0-6 2z" fill="#d0d0d0" stroke="none" /></svg></Slot>
            <StatusField $w={52} $ml={12}>117%</StatusField>
            <DropBtn $h={16} $ml={0} />
            <Slot $ml={7}><svg width="24" height="10" viewBox="0 0 24 10"><path d="M1 1v8M9 1L3 5l6 4zM23 1l-6 4 6 4z" fill="#666" stroke="#666" /></svg></Slot>
            <StatusField $w={42} $ml={13}>1</StatusField>
            <DropBtn $h={16} $ml={0} />
            <Slot $ml={8}><svg width="30" height="10" viewBox="0 0 30 10"><path d="M2 1l6 4-6 4zM19 1l6 4-6 4zM29 1v8" fill="#666" stroke="#666" /></svg></Slot>
            <StatusText>Selección</StatusText>
            <Slot><VSep $h={16} /></Slot>
            <Slot $ml={3} $w={19}><ScrollRight /></Slot>
            <HScroll>
              <ScrollLeft />
              <HThumb />
              <ScrollRight />
            </HScroll>
            <ScrollCorner />
          </StatusBar>
        </Doc>

        <Dock>
          <DockTop>▸▸</DockTop>
          <PanelHead>
            <PanelTab $w={46}><UpDown />Color</PanelTab>
            <PanelMenu><PanelMenuIcon /></PanelMenu>
          </PanelHead>
          <Panel $h={168}>
            <ColorTop>
              <ColorLeft>
                <OverIcon $x={5} $y={6}><DefaultColors /></OverIcon>
                <OverIcon $x={24} $y={6}><SwapArrows /></OverIcon>
                <FillSmall $x={4} $y={24} />
                <StrokeSmall $x={15} $y={33} />
              </ColorLeft>
              <Sliders>
                {sliders.map(s => (
                  <SliderRow key={s.l}>
                    <SliderLetter>{s.l}</SliderLetter>
                    <Track $c={s.c} />
                    <SliderInput>0</SliderInput>
                    <Percent>%</Percent>
                  </SliderRow>
                ))}
              </Sliders>
            </ColorTop>
            <QuickRow>
              <Quick $bg={'linear-gradient(to top left, #fff 0 44%, #b01020 44% 56%, #fff 56% 100%)'} />
              <Quick $bg="#000" />
              <Quick $bg="#fff" />
            </QuickRow>
            <Spectrum />
            <ResizeGrip />
          </Panel>
          <PanelHead $mt={3}>
            <PanelTab $w={56}>Muestras</PanelTab>
            <PanelMenu><PanelMenuIcon /></PanelMenu>
          </PanelHead>
          <Panel $h={199}>
            <SwatchHead>
              <FillSmall $x={4} $y={7} />
              <StrokeSmall $x={15} $y={16} />
              <ViewBtns>
                <ViewBtn $on><svg width="13" height="13"><path d="M0 1.500h13M0 5h13M0 8.500h13M0 12h13" stroke="#eee" strokeWidth="1.600" /></svg></ViewBtn>
                <ViewBtn><svg width="14" height="14" fill="#ddd"><path d="M0 0h4v4H0zM5 0h4v4H5zM10 0h4v4h-4zM0 5h4v4H0zM5 5h4v4H5zM10 5h4v4h-4zM0 10h4v4H0zM5 10h4v4H5zM10 10h4v4h-4z" /></svg></ViewBtn>
              </ViewBtns>
            </SwatchHead>
            <SwatchBox>
              <SwatchList>
                <SwatchRow>
                  <Swatch $bg={'linear-gradient(to top left, #fff 0 44%, #b01020 44% 56%, #fff 56% 100%)'} />
                  <Swatch $bg="#fff"><svg width="11" height="11" fill="none" stroke="#111"><circle cx="5.500" cy="5.500" r="3.500" /><circle cx="5.500" cy="5.500" r="1" fill="#111" /><path d="M5.500 0v11M0 5.500h11" /></svg></Swatch>
                  <Swatch $bg="#000"><svg width="11" height="11"><rect x="1" y="1" width="9" height="9" fill="#fff" /></svg></Swatch>
                  <Swatch $bg="#000" />
                  {row1.map(c => <Swatch key={c} $bg={c} />)}
                </SwatchRow>
                <SwatchRow>{row2.map(c => <Swatch key={c} $bg={c} />)}</SwatchRow>
                <SwatchRow>{row3.map(c => <Swatch key={c} $bg={c} />)}</SwatchRow>
                <SwatchRow $mb={2}>{row4.map(c => <Swatch key={c} $bg={c} />)}</SwatchRow>
                <SwatchRow $mb={2}><Swatch $bg="transparent"><FolderI /></Swatch>{row5.map(c => <Swatch key={c} $bg={c} />)}</SwatchRow>
                <SwatchRow><Swatch $bg="transparent"><FolderI /></Swatch>{row6.map(c => <Swatch key={c} $bg={c} />)}</SwatchRow>
              </SwatchList>
              <SwatchScroll><MiniUp /><MiniDown /></SwatchScroll>
            </SwatchBox>
            <IconBar>
              <IconAt $x={6}><svg width="18" height="14" viewBox="0 0 18 14"><path d="M1 1h2v12H1zM4 1h2v12H4zM7 1l5 11-2 1L7 5z" fill="#cdcdcd" /><path d="M13 11h5l-2.500 3z" fill="#cdcdcd" /></svg></IconAt>
              <IconAt $x={36}><svg width="12" height="14" viewBox="0 0 12 14" fill="none" stroke="#ccc" strokeWidth="1.400"><circle cx="3" cy="7" r="2" /><circle cx="9" cy="3" r="2" /><circle cx="9" cy="11" r="2" /><path d="M5 6l2-2M5 8l2 2" /></svg></IconAt>
              <IconAt $x={60}><svg width="17" height="14" viewBox="0 0 17 14" fill="none" stroke="#ccc"><path d="M1 2h5l1 1h5v3M8 13H1V2" /><rect x="8" y="8" width="4" height="4" rx="2" /><rect x="11" y="8" width="5" height="4" rx="2" /></svg></IconAt>
              <IconAt $x={96}><svg width="18" height="14" viewBox="0 0 18 14" fill="#ccc"><path d="M0 1h3v3H0zM4 1h3v3H4zM8 1h3v3H8zM0 5h3v3H0zM4 5h3v3H4zM8 5h3v3H8zM0 9h3v3H0zM4 9h3v3H4zM8 9h3v3H8zM13 10h5l-2.500 3z" /></svg></IconAt>
              <IconAt $x={125}><svg width="12" height="13" viewBox="0 0 12 13" fill="none" stroke="#ccc"><rect x=".5" y="1.500" width="10" height="10" /><path d="M3 4h5M3 6.500h5M3 9h5" /></svg></IconAt>
              <IconAt $x={150}><BarIcon d="M1 3h5l1 1.500h6V12H1z" /></IconAt>
              <IconAt $x={178}><BarIcon d="M3 1h10v11H6V8H2z" fill="#b8b8b8" stroke="#ddd" /></IconAt>
              <IconAt $x={202}><BarIcon d="M2 3h10v1H2zM5 1h4v2H5zM3 5h8v8H3z" fill="#c0c0c0" /></IconAt>
            </IconBar>
            <ResizeGrip />
          </Panel>
          <PanelHead $mt={1}>
            <PanelTab $w={84}><UpDown />Transparencia</PanelTab>
            <PanelMenu><PanelMenuIcon /></PanelMenu>
          </PanelHead>
          <PanelHead $mt={5}>
            <PanelTab $w={40}>Capas</PanelTab>
            <PanelMenu><PanelMenuIcon /></PanelMenu>
          </PanelHead>
          <Panel $h={199}>
            <LayerBox>
              <LayerRow>
                <LayerCell $w={20}><Eye /></LayerCell>
                <LayerCell $w={21} />
                <ColorBar />
                <LayerArrow />
                <Thumb><ThumbArt /></Thumb>
                <LayerName>Capa 1</LayerName>
                <Target><TargetRing /></Target>
                <LayerFlag />
              </LayerRow>
            </LayerBox>
            <IconBar>
              <LayerCount>1 capa</LayerCount>
              <IconAt $x={98}><svg width="14" height="14" viewBox="0 0 14 14" fill="none" stroke="#6f6f6f" strokeWidth="1.400"><circle cx="8.500" cy="5" r="4" /><path d="M5.500 8L1 13" /></svg></IconAt>
              <IconAt $x={124}><svg width="14" height="14" viewBox="0 0 14 14" fill="none" stroke="#ddd"><rect x=".5" y=".5" width="8" height="8" strokeWidth="1.400" /><rect x="4.500" y="4.500" width="9" height="9" stroke="#999" /></svg></IconAt>
              <IconAt $x={150}><svg width="16" height="14" viewBox="0 0 16 14"><path d="M7 3h8v9H9z" fill="#ccc" /><path d="M0 3h5M2 1L0 3l2 2M5 6l3 3" stroke="#ddd" fill="none" /></svg></IconAt>
              <IconAt $x={178}><BarIcon d="M3 1h10v11H6V8H2z" fill="#b8b8b8" stroke="#ddd" /></IconAt>
              <IconAt $x={202}><BarIcon d="M2 3h10v1H2zM5 1h4v2H5zM3 5h8v8H3z" fill="#6a6a6a" /></IconAt>
            </IconBar>
          </Panel>
        </Dock>
      </Work>
      <Watermark>lynda.com</Watermark>
    </Root>
  );
}
